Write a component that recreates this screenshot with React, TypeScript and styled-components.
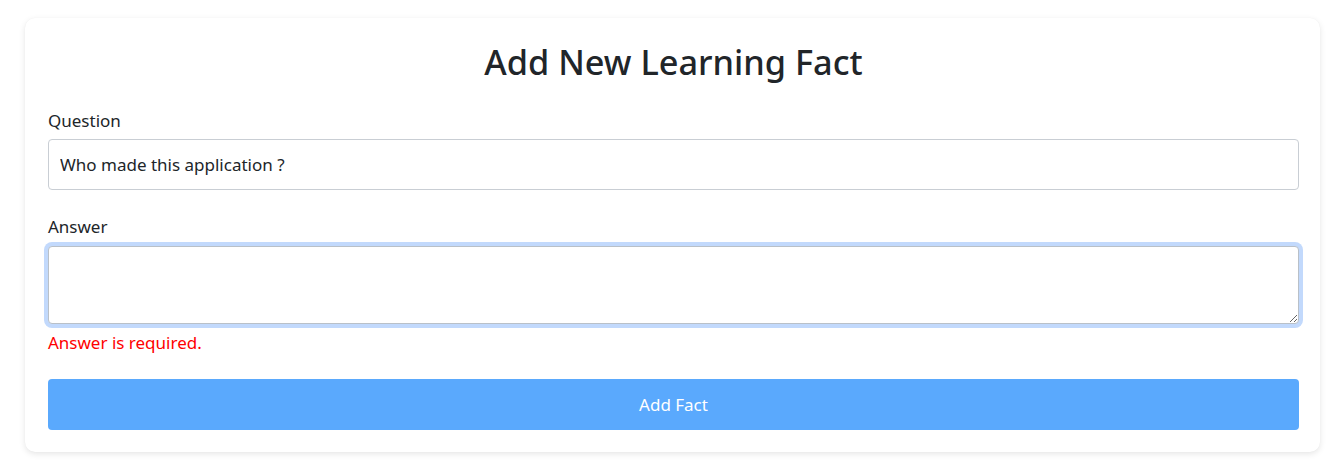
import React from "react";
import styled, { createGlobalStyle } from "styled-components";

const Global = createGlobalStyle`
  html, body { margin: 0; padding: 0; background: #ffffff; }
  body { font-family: "Segoe UI", "Noto Sans", "Liberation Sans", sans-serif; color: #212529; }
  * { box-sizing: border-box; }
`;

const Page = styled.div`
  padding: 18px 19px 14px 25px;
`;

const Card = styled.form`
  background: #fff;
  border-radius: 10px;
  box-shadow: 0 2px 6px rgba(0, 0, 0, 0.1), 0 0 1px rgba(0, 0, 0, 0.05);
  padding: 24px 21px 22px 23px;
  display: flex;
  flex-direction: column;
`;

const Title = styled.h2`
  margin: 0 0 25px;
  text-align: center;
  font-size: 34.3px;
  font-weight: 500;
  line-height: 40.8px;
  color: #212529;
`;

const Field = styled.div<{ $gap: number }>`
  display: flex;
  flex-direction: column;
  margin-bottom: ${(p) => p.$gap}px;
`;

const Label = styled.label`
  font-size: 17px;
  line-height: 25.5px;
  margin-bottom: 6px;
  color: #212529;
`;

const Input = styled.input`
  height: 51px;
  padding: 12px 11px;
  font: inherit;
  font-size: 17px;
  color: #212529;
  border: 1px solid #c9ced4;
  border-radius: 4px;
  outline: none;
`;

const TextArea = styled.textarea`
  height: 78px;
  padding: 12px 11px;
  font: inherit;
  font-size: 17px;
  color: #212529;
  border: 1px solid #b9c0c8;
  border-radius: 4px;
  outline: none;
  box-shadow: 0 0 0 4px #c2d9fc;
  resize: vertical;
`;

const ErrorText = styled.div`
  margin-top: 6px;
  font-size: 17px;
  line-height: 25.5px;
  color: #ff0000;
`;

const Button = styled.button`
  height: 51px;
  border: none;
  border-radius: 4px;
  background: #5aa9fd;
  color: #fff;
  font: inherit;
  font-size: 17px;
  cursor: default;
`;

export default function App() {
  return (
    <>
      <Global />
      <Page>
        <Card onSubmit={(e) => e.preventDefault()}>
          <Title>Add New Learning Fact</Title>
          <Field $gap={24}>
            <Label>Question</Label>
            <Input defaultValue="Who made this application ?" />
          </Field>
          <Field $gap={24}>
            <Label>Answer</Label>
            <TextArea defaultValue="" autoFocus />
            <ErrorText>Answer is required.</ErrorText>
          </Field>
          <Button type="submit">Add Fact</Button>
        </Card>
      </Page>
    </>
  );
}
